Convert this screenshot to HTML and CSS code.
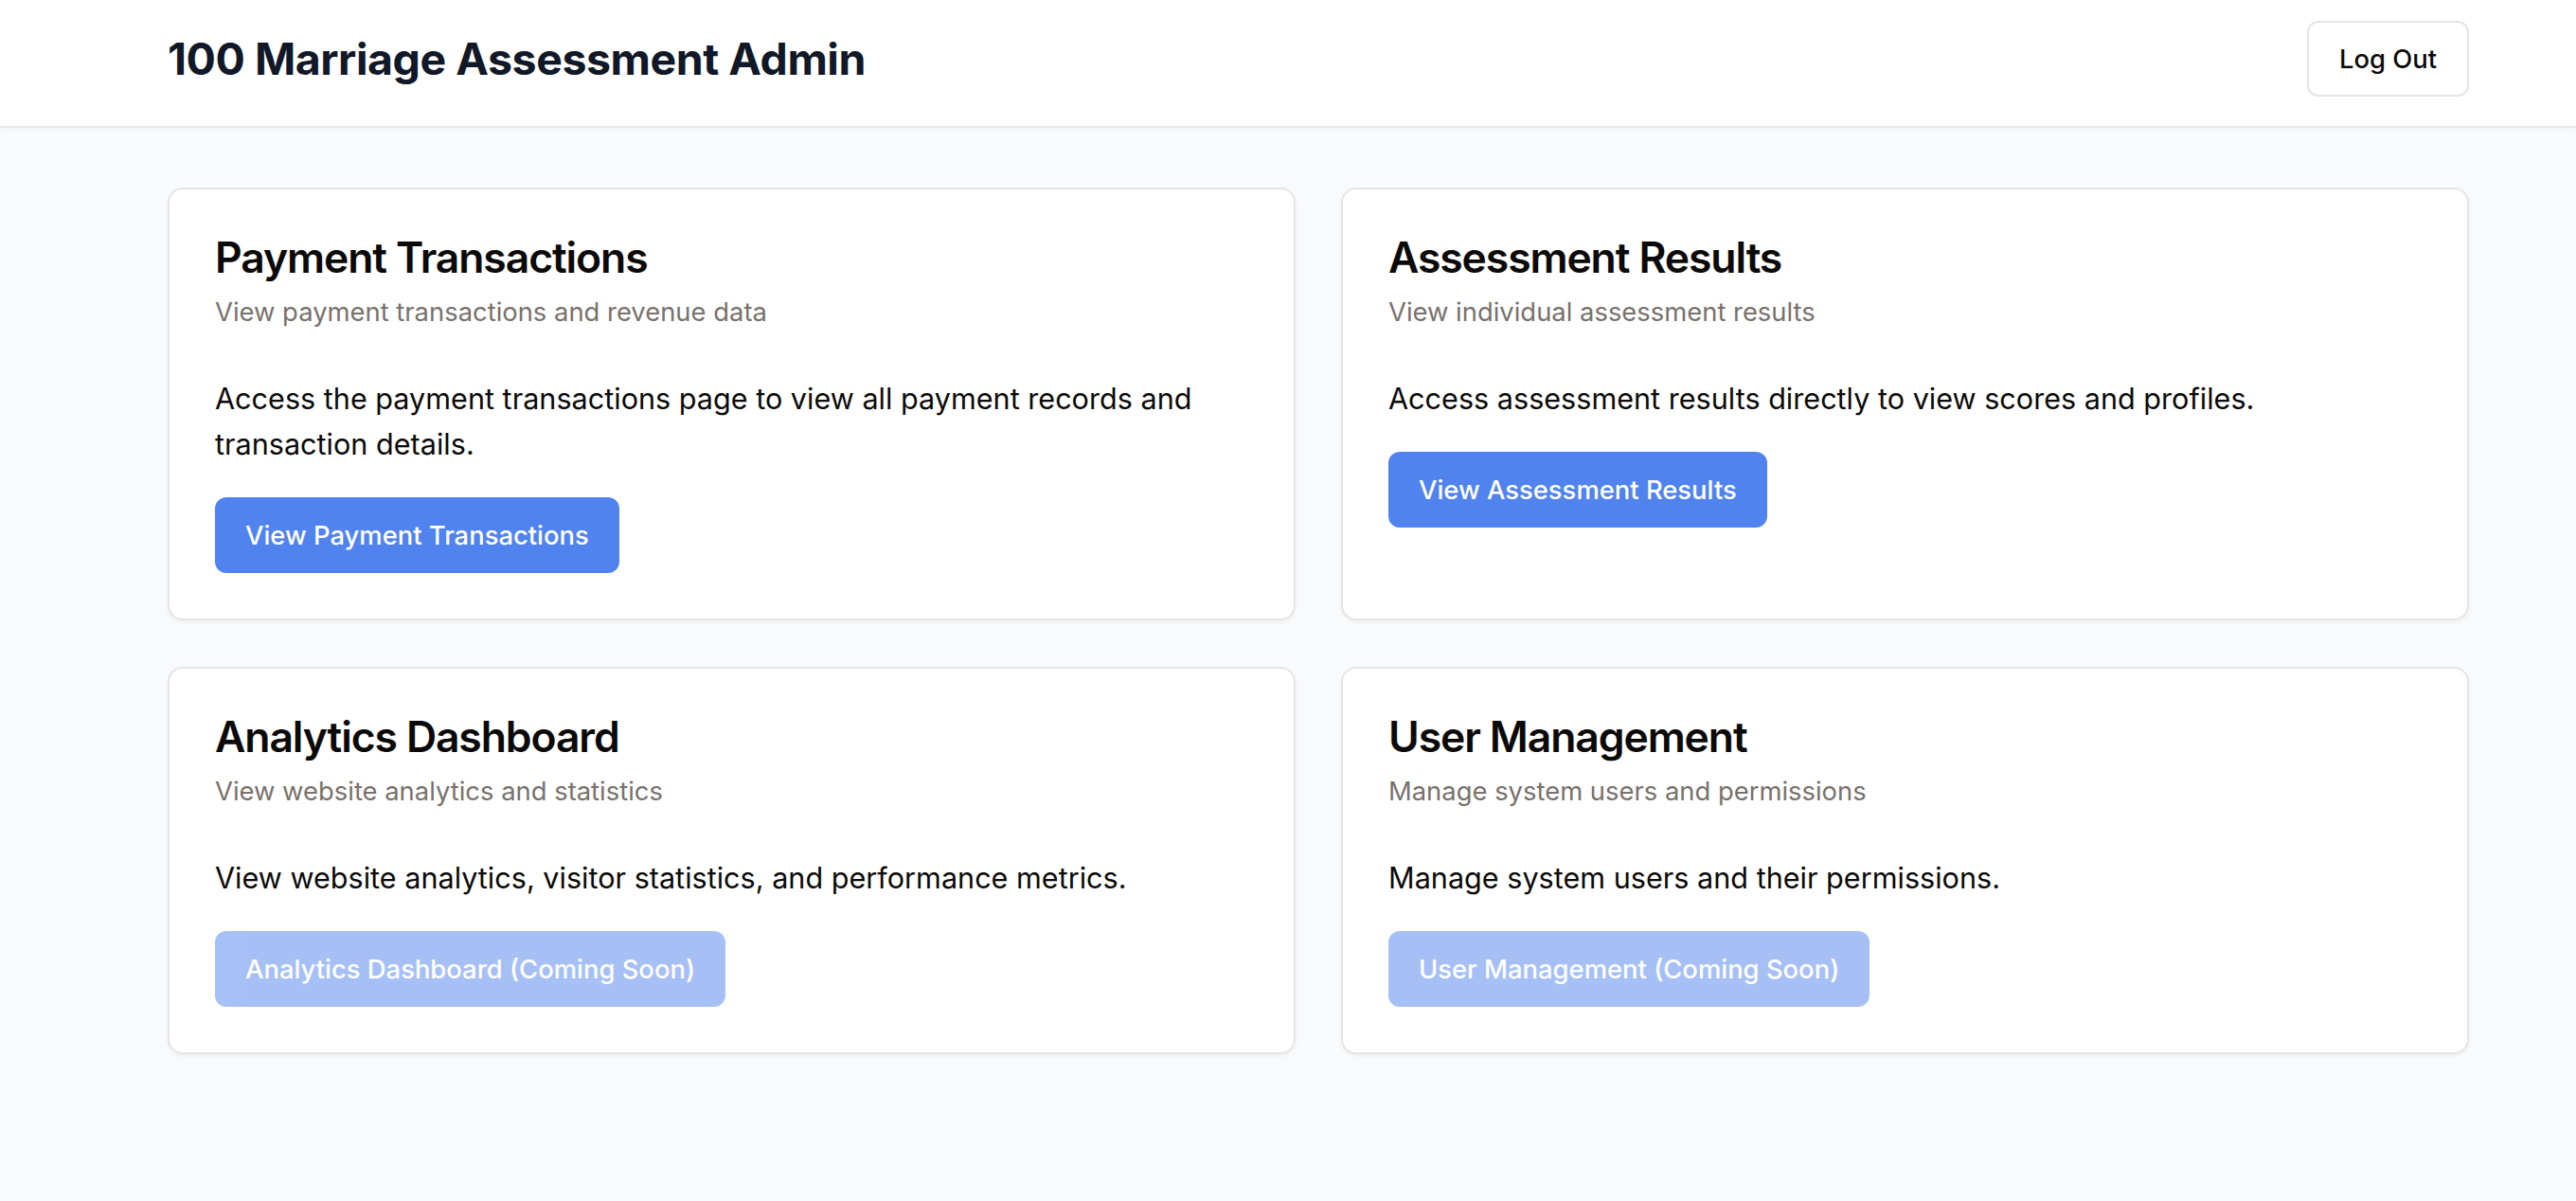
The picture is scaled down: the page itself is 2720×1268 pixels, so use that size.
FILE: index.html
```html
<!DOCTYPE html>
<html lang="en">
<head>
<meta charset="utf-8">
<title>100 Marriage Assessment Admin</title>
<link rel="stylesheet" href="styles.css">
</head>
<body>
<header class="topbar">
  <div class="topbar-inner">
    <h1 class="brand">100 Marriage Assessment Admin</h1>
    <button class="btn btn-outline">Log Out</button>
  </div>
</header>
<main class="main">
  <div class="grid">
    <section class="card">
      <div class="card-header">
        <h2 class="card-title">Payment Transactions</h2>
        <p class="card-desc">View payment transactions and revenue data</p>
      </div>
      <div class="card-content">
        <p class="card-text">Access the payment transactions page to view all payment records and transaction details.</p>
        <button class="btn btn-primary">View Payment Transactions</button>
      </div>
    </section>
    <section class="card">
      <div class="card-header">
        <h2 class="card-title">Assessment Results</h2>
        <p class="card-desc">View individual assessment results</p>
      </div>
      <div class="card-content">
        <p class="card-text">Access assessment results directly to view scores and profiles.</p>
        <button class="btn btn-primary">View Assessment Results</button>
      </div>
    </section>
    <section class="card">
      <div class="card-header">
        <h2 class="card-title">Analytics Dashboard</h2>
        <p class="card-desc">View website analytics and statistics</p>
      </div>
      <div class="card-content">
        <p class="card-text">View website analytics, visitor statistics, and performance metrics.</p>
        <button class="btn btn-primary btn-disabled" disabled>Analytics Dashboard (Coming Soon)</button>
      </div>
    </section>
    <section class="card">
      <div class="card-header">
        <h2 class="card-title">User Management</h2>
        <p class="card-desc">Manage system users and permissions</p>
      </div>
      <div class="card-content">
        <p class="card-text">Manage system users and their permissions.</p>
        <button class="btn btn-primary btn-disabled" disabled>User Management (Coming Soon)</button>
      </div>
    </section>
  </div>
</main>
</body>
</html>
```

FILE: styles.css
```css
* { box-sizing: border-box; }
html, body { margin: 0; padding: 0; }
body {
  background: #f9fafb;
  font-family: Inter, "Noto Sans", "Liberation Sans", sans-serif;
  color: #0c0a09;
  min-height: 1268px;
}
.topbar {
  background: #ffffff;
  border-bottom: 2px solid #e7e7e9;
  box-shadow: 0 2px 4px rgba(0,0,0,0.04);
}
.topbar-inner {
  display: flex;
  align-items: center;
  justify-content: space-between;
  padding: 22px 113px 31px 177px;
}
.brand {
  margin: 0;
  font-size: 46.5px;
  line-height: 64px;
  font-weight: 700;
  color: #111827;
  letter-spacing: -0.01em;
}
.main {
  padding: 63px 113px 64px 177px;
}
.grid {
  display: grid;
  grid-template-columns: 1fr 1fr;
  gap: 48px 48px;
  row-gap: 49px;
}
.card {
  background: #ffffff;
  border: 2px solid #e7e5e4;
  border-radius: 16px;
  box-shadow: 0 2px 4px rgba(0,0,0,0.05);
}
.card-header {
  display: flex;
  flex-direction: column;
  gap: 12px;
  padding: 48px 48px 48px;
}
.card-title {
  margin: 0;
  font-size: 44.5px;
  line-height: 49px;
  font-weight: 600;
  letter-spacing: -0.025em;
  color: #0c0a09;
}
.card-desc {
  margin: 0;
  font-size: 27.4px;
  line-height: 40px;
  color: #78716c;
}
.card-content {
  padding: 0 48px 48px;
}
.card-text {
  margin: 0 0 32px;
  font-size: 30.6px;
  line-height: 48px;
  color: #0c0a09;
}
.btn {
  font-family: inherit;
  font-size: 27.4px;
  font-weight: 500;
  height: 80px;
  padding: 0 32px;
  border-radius: 12px;
  cursor: pointer;
}
.btn-outline {
  background: #ffffff;
  border: 2px solid #e5e5e5;
  color: #0c0a09;
}
.btn-primary {
  background: #5083ee;
  border: none;
  color: #ffffff;
}
.btn-disabled {
  opacity: 0.5;
  cursor: default;
}
```
